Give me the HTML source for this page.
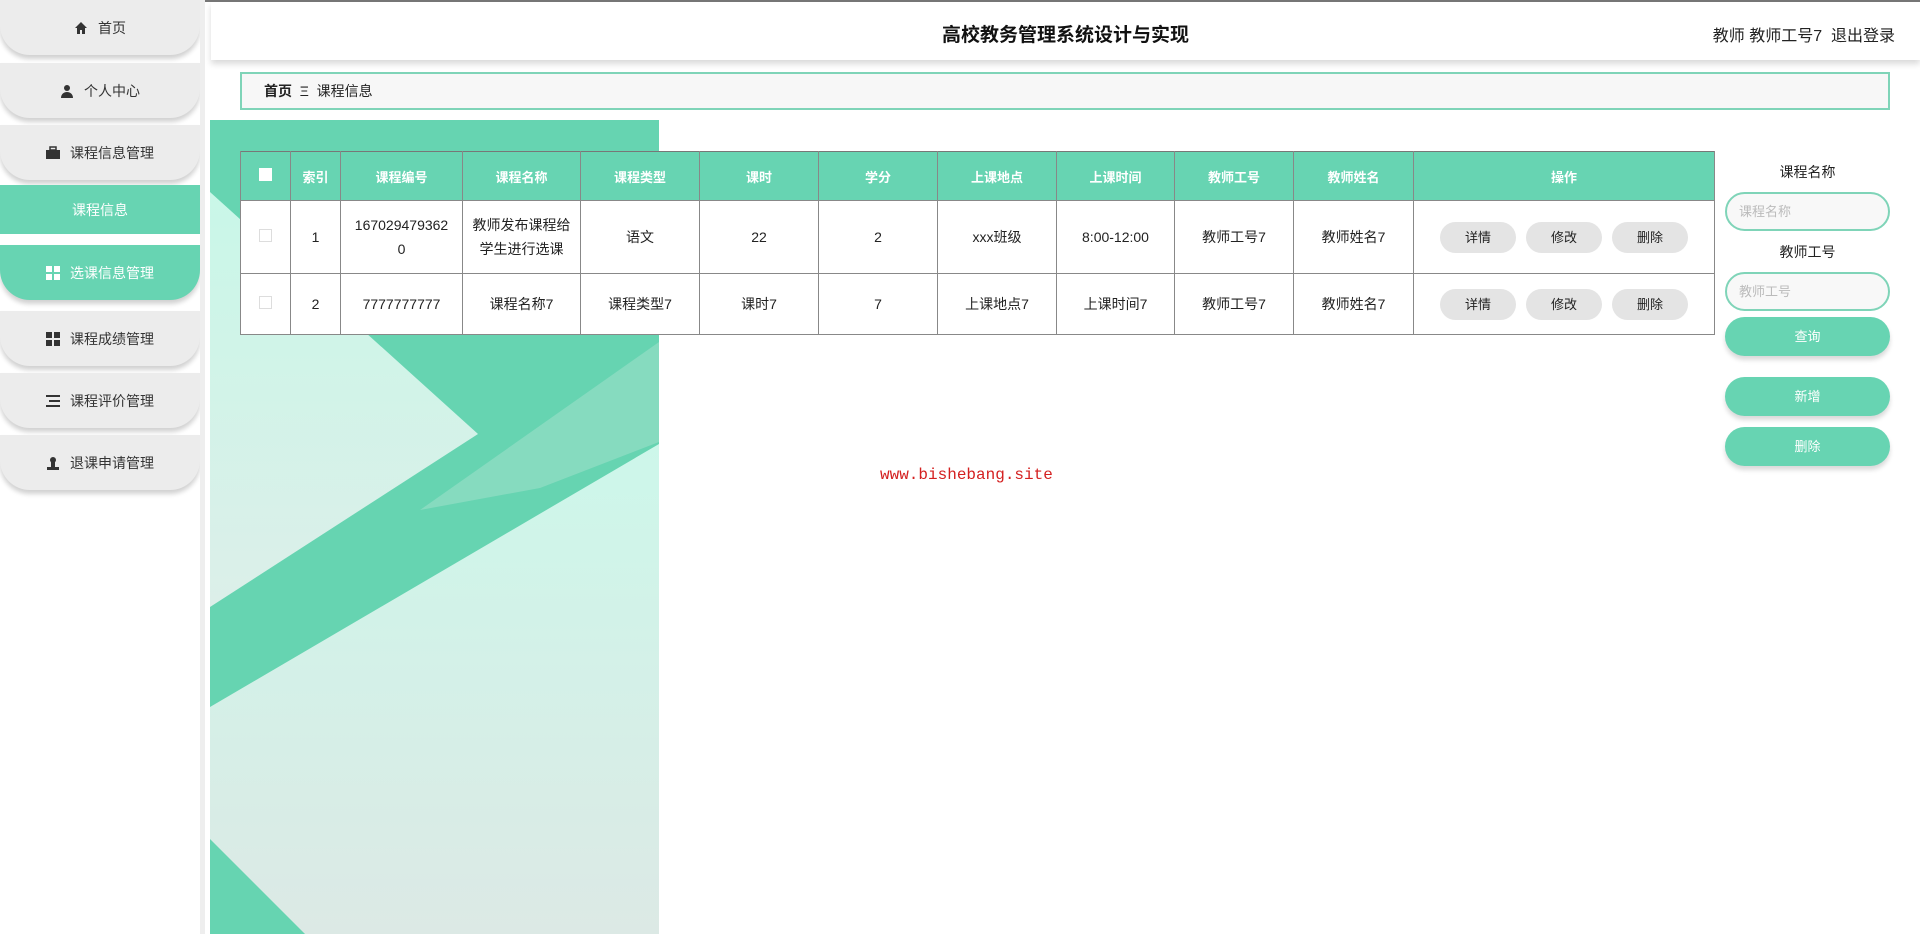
<!DOCTYPE html>
<html><head><meta charset="utf-8"><style>
*{box-sizing:border-box;margin:0;padding:0}
body{width:1920px;height:934px;overflow:hidden;background:#fff;font-family:"Liberation Sans","Noto Sans CJK SC",sans-serif;color:#222;position:relative}
.top{position:absolute;left:0;top:0;width:1920px;height:2px;background:#777}
.side{position:absolute;left:0;top:0;width:200px;height:934px;background:#fff}
.sbar{position:absolute;left:200px;top:0;width:5px;height:934px;background:#eee}
.it{position:absolute;left:0;width:200px;height:55px;background:#ececec;border-radius:0 0 30px 30px;box-shadow:0 4px 5px rgba(0,0,0,.18);display:flex;align-items:center;justify-content:center;font-size:14px;color:#333}
.it svg{margin-right:10px}
.it.g{background:#67d4b2;color:#fff}
.flat{position:absolute;left:0;top:185px;width:200px;height:49px;background:#67d4b2;color:#fff;font-size:14px;display:flex;align-items:center;justify-content:center}
.hdr{position:absolute;left:211px;top:2px;width:1709px;height:58px;background:#fff;box-shadow:0 4px 6px rgba(0,0,0,.15)}
.title{position:absolute;left:0;width:1709px;top:18px;text-align:center;font-size:19px;font-weight:bold;color:#111}
.user{position:absolute;right:25px;top:20px;font-size:16px;color:#222}
.bc{position:absolute;left:240px;top:72px;width:1650px;height:38px;background:#f7f7f7;border:2px solid #7fd4b8;font-size:14px;line-height:34px;padding-left:22px}
.panel{position:absolute;left:210px;top:120px;width:449px;height:814px}
table{position:absolute;left:240px;top:151px;border-collapse:collapse;font-size:14px;border:1px solid #777}
th{background:#67d4b2;color:#fff;height:49px;font-weight:bold;font-size:13px;border:1px solid #888;border-top:0}
td{background:#fff;text-align:center;border:1px solid #888;font-size:14px;line-height:24px}
.cb{display:inline-block;width:13px;height:13px;border:1px solid #ddd;background:#fff}
th .cb{background:#fff;border:0}
.b{display:inline-block;width:76px;height:31px;line-height:31px;border-radius:16px;background:#e4e4e4;margin:0 5px;font-size:13px}
.rp{position:absolute;left:1725px;width:165px}
.lbl{text-align:center;font-size:14px}
.inp{height:39px;border:2px solid #7fd4b8;border-radius:20px;background:#f8f8f8;font-size:13px;color:#bbb;line-height:35px;padding-left:12px}
.gb{height:39px;border-radius:20px;background:#67d4b2;color:#fff;text-align:center;line-height:39px;font-size:13px;box-shadow:0 4px 5px rgba(0,0,0,.15)}
.wm{position:absolute;left:880px;top:466px;font-family:"Liberation Mono",monospace;font-size:16px;color:#d42020}
</style></head><body>
<div class="top"></div>
<div class="side">
<div class="it" style="top:0"><svg width="14" height="14" viewBox="0 0 14 14"><path d="M7 1L1 7h2v6h3V9h2v4h3V7h2z" fill="#333"/></svg>首页</div>
<div class="it" style="top:63px"><svg width="14" height="14" viewBox="0 0 14 14"><circle cx="7" cy="4" r="3" fill="#333"/><path d="M1 14c0-4 3-6 6-6s6 2 6 6z" fill="#333"/></svg>个人中心</div>
<div class="it" style="top:125px"><svg width="14" height="14" viewBox="0 0 14 14"><rect x="4" y="1" width="6" height="3" fill="none" stroke="#333" stroke-width="1.5"/><rect x="0" y="4" width="14" height="9" fill="#333"/></svg>课程信息管理</div>
<div class="flat">课程信息</div>
<div class="it g" style="top:245px"><svg width="14" height="14" viewBox="0 0 14 14" fill="#fff"><rect x="0" y="0" width="6" height="6"/><rect x="8" y="0" width="6" height="6"/><rect x="0" y="8" width="6" height="6"/><rect x="8" y="8" width="6" height="6"/></svg>选课信息管理</div>
<div class="it" style="top:311px"><svg width="14" height="14" viewBox="0 0 14 14" fill="#333"><rect x="0" y="0" width="6" height="6"/><rect x="8" y="0" width="6" height="6"/><rect x="0" y="8" width="6" height="6"/><rect x="8" y="8" width="6" height="6"/></svg>课程成绩管理</div>
<div class="it" style="top:373px"><svg width="14" height="14" viewBox="0 0 14 14" fill="#333"><rect x="0" y="1" width="14" height="2"/><rect x="3" y="6" width="11" height="2"/><rect x="0" y="11" width="14" height="2"/></svg>课程评价管理</div>
<div class="it" style="top:435px"><svg width="14" height="14" viewBox="0 0 14 14" fill="#333"><circle cx="7" cy="4" r="3"/><rect x="5" y="6" width="4" height="5"/><rect x="1" y="11" width="12" height="3"/></svg>退课申请管理</div>
</div>
<div class="sbar"></div>
<div class="hdr"><div class="title">高校教务管理系统设计与实现</div><div class="user">教师 教师工号7&nbsp;&nbsp;退出登录</div></div>
<div class="bc"><b>首页</b>&nbsp;&nbsp;Ξ&nbsp;&nbsp;课程信息</div>
<svg class="panel" viewBox="0 0 449 814" width="449" height="814">
<defs><linearGradient id="g1" x1="0" y1="0" x2="0" y2="1"><stop offset="0" stop-color="#c9f7e8"/><stop offset="1" stop-color="#dcefe9"/></linearGradient>
<linearGradient id="g2" x1="0" y1="0" x2="0" y2="1"><stop offset="0" stop-color="#cdf7ea"/><stop offset="1" stop-color="#dce9e5"/></linearGradient></defs>
<rect width="449" height="814" fill="#66d4b1"/>
<polygon points="0,72 268,314 0,487" fill="url(#g1)"/>
<polygon points="210,390 449,222 449,322 330,368" fill="#8fdcc3" opacity=".8"/>
<polygon points="0,587 449,324 449,814 95,814 0,719" fill="url(#g2)"/>
</svg>
<table>
<tr><th style="width:50px"><span class="cb"></span></th><th style="width:50px">索引</th><th style="width:122px">课程编号</th><th style="width:118px">课程名称</th><th style="width:119px">课程类型</th><th style="width:119px">课时</th><th style="width:119px">学分</th><th style="width:119px">上课地点</th><th style="width:118px">上课时间</th><th style="width:119px">教师工号</th><th style="width:120px">教师姓名</th><th style="width:301px">操作</th></tr>
<tr style="height:73px"><td><span class="cb"></span></td><td>1</td><td>167029479362<br>0</td><td>教师发布课程给<br>学生进行选课</td><td>语文</td><td>22</td><td>2</td><td>xxx班级</td><td>8:00-12:00</td><td>教师工号7</td><td>教师姓名7</td><td><span class="b">详情</span><span class="b">修改</span><span class="b">删除</span></td></tr>
<tr style="height:61px"><td><span class="cb"></span></td><td>2</td><td>7777777777</td><td>课程名称7</td><td>课程类型7</td><td>课时7</td><td>7</td><td>上课地点7</td><td>上课时间7</td><td>教师工号7</td><td>教师姓名7</td><td><span class="b">详情</span><span class="b">修改</span><span class="b">删除</span></td></tr>
</table>
<div class="rp lbl" style="top:162px">课程名称</div>
<div class="rp inp" style="top:192px">课程名称</div>
<div class="rp lbl" style="top:242px">教师工号</div>
<div class="rp inp" style="top:272px">教师工号</div>
<div class="rp gb" style="top:317px">查询</div>
<div class="rp gb" style="top:377px">新增</div>
<div class="rp gb" style="top:427px">删除</div>
<div class="wm">www.bishebang.site</div>
</body></html>
